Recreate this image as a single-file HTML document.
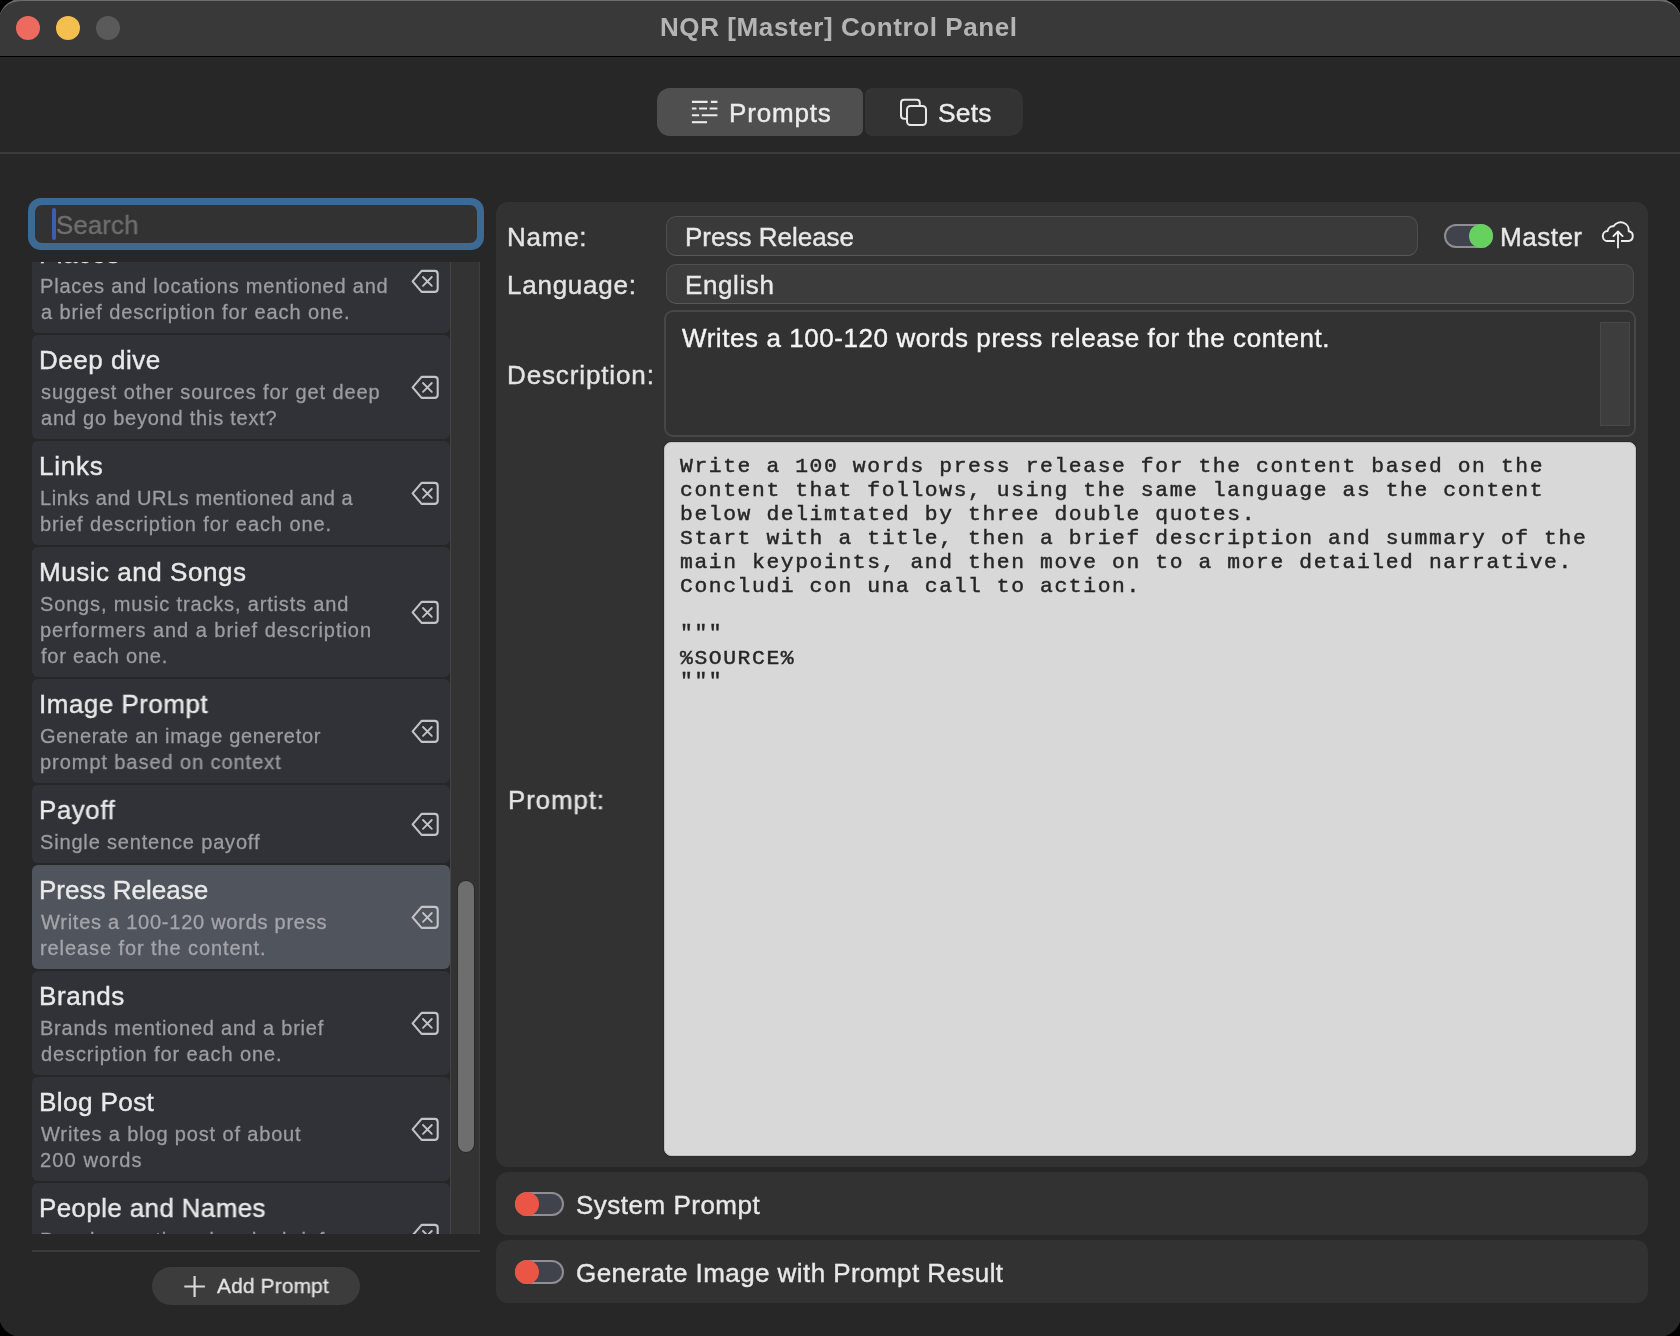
<!DOCTYPE html>
<html><head><meta charset="utf-8">
<style>
*{box-sizing:border-box;margin:0;padding:0}
html,body{width:1680px;height:1336px;overflow:hidden;background:#000}
body{font-family:"Liberation Sans",sans-serif;position:relative}
.a{position:absolute}
.t{position:absolute;white-space:pre;line-height:1;will-change:transform}
#win{position:absolute;left:-1px;top:-1px;width:1682px;height:1338px;border-radius:22px;background:#272727;overflow:hidden}
#winb{position:absolute;left:-1px;top:-1px;width:1682px;height:1338px;border-radius:22px;border-top:2.6px solid #6c6c6c}
#titlebar{position:absolute;left:0;top:0;width:1684px;height:57px;background:#393939}
.light{position:absolute;width:24.4px;height:24.4px;border-radius:50%}
#list{position:absolute;left:32px;top:262px;width:418px;height:972px;overflow:hidden}
.item{position:absolute;left:0;width:418px;background:#303237;border-radius:6px}
.item.sel{background:#50545c}
.ititle{position:absolute;left:8px;font-size:26px;color:#e6e6e6;white-space:pre;line-height:1}
.idesc{position:absolute;left:8px;font-size:20px;color:#9c9ca1;white-space:pre;line-height:1;letter-spacing:0.7px}
.del{position:absolute;left:379px;width:28px;height:24px}
.panel{position:absolute;left:496px;width:1152px;background:#323232;border-radius:12px}
.lbl{position:absolute;font-size:26px;color:#e4e4e4;white-space:pre;line-height:1}
.toggle{position:absolute;width:49px;height:24px;border-radius:12px;background:#40434b;border:2px solid #8e8e93}
.knob{position:absolute;top:-2px;width:24px;height:24px;border-radius:50%}
.mono{position:absolute;will-change:transform;left:680px;font-family:"Liberation Mono",monospace;font-size:21px;letter-spacing:1.58px;color:#262626;-webkit-text-stroke:0.45px #262626;transform-origin:0 0;transform:scaleX(1.0155);white-space:pre;line-height:1}
</style></head><body>
<div id="win"><div id="titlebar"></div></div><div id="winb"></div>
<!-- title bar -->
<div class="light" style="left:15.8px;top:15.8px;background:#ed6a5e"></div>
<div class="light" style="left:55.8px;top:15.8px;background:#f5bf4f"></div>
<div class="light" style="left:95.8px;top:15.8px;background:#5a5a5a"></div>
<div class="a" style="left:0;top:56px;width:1680px;height:1px;background:#000"></div>
<!-- segmented control -->
<div class="a" style="left:657px;top:88px;width:206px;height:48px;background:#4f4f4f;border-radius:13px 7px 7px 13px"></div>
<div class="a" style="left:865px;top:88px;width:158px;height:48px;background:#333333;border-radius:7px 13px 13px 7px"></div>
<svg class="a" style="left:690px;top:99px" width="30" height="26" viewBox="0 0 30 26">
  <g stroke="#ececec" stroke-width="2.1" fill="none">
    <path d="M1.9 2.9H17.6M20.9 2.9H27.4"/>
    <path d="M1.9 9.5H6.5M9.1 9.5H17M19.6 9.5H27.4"/>
    <path d="M1.9 16.3H9.1M11.7 16.3H27.4"/>
    <path d="M1.9 23.2H17"/>
  </g>
</svg>
<svg class="a" style="left:898px;top:97px" width="32" height="32" viewBox="0 0 32 32">
  <g stroke="#e8e8e8" stroke-width="2" fill="none">
    <path d="M9 9V6Q9 3 12 3H6Q3 3 3 6" style="display:none"/>
    <path d="M9 21.8H6.2Q3 21.8 3 18.6V6Q3 2.8 6.2 2.8H18.6Q21.8 2.8 21.8 6V9"/>
    <rect x="9" y="9" width="19" height="19" rx="3.5"/>
  </g>
</svg>
<div class="a" style="left:0;top:152px;width:1680px;height:2px;background:#3b3b3b"></div>

<!-- search -->
<div class="a" style="left:28px;top:198px;width:456px;height:52px;border-radius:13px;background:#3d6a95"></div>
<div class="a" style="left:35px;top:205px;width:442px;height:38px;border-radius:7px;background:#323232"></div>
<div class="a" style="left:52px;top:208px;width:4px;height:32px;border-radius:2px;background:#3c5fb2"></div>

<!-- list -->
<div id="list">
<div class="item" style="top:-33px;height:104px"></div>
<svg class="a" style="left:379px;top:6.7px" width="28" height="24" viewBox="0 0 28 24"><g fill="none" stroke="#c4c4c6" stroke-width="2.1" stroke-linejoin="round" stroke-linecap="round"><path d="M10.6 1.9H23.6Q26.7 1.9 26.7 5V19.8Q26.7 22.9 23.6 22.9H10.6L1.6 12.4Z"/><path d="M12 8L20.8 16.8M20.8 8L12 16.8" stroke-width="1.8"/></g></svg>
<div class="item" style="top:73px;height:104px"></div>
<svg class="a" style="left:379px;top:112.7px" width="28" height="24" viewBox="0 0 28 24"><g fill="none" stroke="#c4c4c6" stroke-width="2.1" stroke-linejoin="round" stroke-linecap="round"><path d="M10.6 1.9H23.6Q26.7 1.9 26.7 5V19.8Q26.7 22.9 23.6 22.9H10.6L1.6 12.4Z"/><path d="M12 8L20.8 16.8M20.8 8L12 16.8" stroke-width="1.8"/></g></svg>
<div class="item" style="top:179px;height:104px"></div>
<svg class="a" style="left:379px;top:218.7px" width="28" height="24" viewBox="0 0 28 24"><g fill="none" stroke="#c4c4c6" stroke-width="2.1" stroke-linejoin="round" stroke-linecap="round"><path d="M10.6 1.9H23.6Q26.7 1.9 26.7 5V19.8Q26.7 22.9 23.6 22.9H10.6L1.6 12.4Z"/><path d="M12 8L20.8 16.8M20.8 8L12 16.8" stroke-width="1.8"/></g></svg>
<div class="item" style="top:285px;height:130px"></div>
<svg class="a" style="left:379px;top:337.7px" width="28" height="24" viewBox="0 0 28 24"><g fill="none" stroke="#c4c4c6" stroke-width="2.1" stroke-linejoin="round" stroke-linecap="round"><path d="M10.6 1.9H23.6Q26.7 1.9 26.7 5V19.8Q26.7 22.9 23.6 22.9H10.6L1.6 12.4Z"/><path d="M12 8L20.8 16.8M20.8 8L12 16.8" stroke-width="1.8"/></g></svg>
<div class="item" style="top:417px;height:104px"></div>
<svg class="a" style="left:379px;top:456.7px" width="28" height="24" viewBox="0 0 28 24"><g fill="none" stroke="#c4c4c6" stroke-width="2.1" stroke-linejoin="round" stroke-linecap="round"><path d="M10.6 1.9H23.6Q26.7 1.9 26.7 5V19.8Q26.7 22.9 23.6 22.9H10.6L1.6 12.4Z"/><path d="M12 8L20.8 16.8M20.8 8L12 16.8" stroke-width="1.8"/></g></svg>
<div class="item" style="top:523px;height:78px"></div>
<svg class="a" style="left:379px;top:549.7px" width="28" height="24" viewBox="0 0 28 24"><g fill="none" stroke="#c4c4c6" stroke-width="2.1" stroke-linejoin="round" stroke-linecap="round"><path d="M10.6 1.9H23.6Q26.7 1.9 26.7 5V19.8Q26.7 22.9 23.6 22.9H10.6L1.6 12.4Z"/><path d="M12 8L20.8 16.8M20.8 8L12 16.8" stroke-width="1.8"/></g></svg>
<div class="item sel" style="top:603px;height:104px"></div>
<svg class="a" style="left:379px;top:642.7px" width="28" height="24" viewBox="0 0 28 24"><g fill="none" stroke="#c4c4c6" stroke-width="2.1" stroke-linejoin="round" stroke-linecap="round"><path d="M10.6 1.9H23.6Q26.7 1.9 26.7 5V19.8Q26.7 22.9 23.6 22.9H10.6L1.6 12.4Z"/><path d="M12 8L20.8 16.8M20.8 8L12 16.8" stroke-width="1.8"/></g></svg>
<div class="item" style="top:709px;height:104px"></div>
<svg class="a" style="left:379px;top:748.7px" width="28" height="24" viewBox="0 0 28 24"><g fill="none" stroke="#c4c4c6" stroke-width="2.1" stroke-linejoin="round" stroke-linecap="round"><path d="M10.6 1.9H23.6Q26.7 1.9 26.7 5V19.8Q26.7 22.9 23.6 22.9H10.6L1.6 12.4Z"/><path d="M12 8L20.8 16.8M20.8 8L12 16.8" stroke-width="1.8"/></g></svg>
<div class="item" style="top:815px;height:104px"></div>
<svg class="a" style="left:379px;top:854.7px" width="28" height="24" viewBox="0 0 28 24"><g fill="none" stroke="#c4c4c6" stroke-width="2.1" stroke-linejoin="round" stroke-linecap="round"><path d="M10.6 1.9H23.6Q26.7 1.9 26.7 5V19.8Q26.7 22.9 23.6 22.9H10.6L1.6 12.4Z"/><path d="M12 8L20.8 16.8M20.8 8L12 16.8" stroke-width="1.8"/></g></svg>
<div class="item" style="top:921px;height:104px"></div>
<svg class="a" style="left:379px;top:960.7px" width="28" height="24" viewBox="0 0 28 24"><g fill="none" stroke="#c4c4c6" stroke-width="2.1" stroke-linejoin="round" stroke-linecap="round"><path d="M10.6 1.9H23.6Q26.7 1.9 26.7 5V19.8Q26.7 22.9 23.6 22.9H10.6L1.6 12.4Z"/><path d="M12 8L20.8 16.8M20.8 8L12 16.8" stroke-width="1.8"/></g></svg>
<div class="t" style="left:7.0px;top:-21px;font-size:26px;letter-spacing:0.5px;color:#e9e9e9;-webkit-text-stroke:0.4px #e9e9e9;">Places</div>
<div class="t" style="left:7.6px;top:14px;font-size:20px;letter-spacing:0.78px;color:#9c9ca1;transform:scaleX(1.002);transform-origin:0 0;-webkit-text-stroke:0.3px #9c9ca1;">Places and locations mentioned and</div>
<div class="t" style="left:8.6px;top:40px;font-size:20px;letter-spacing:0.884px;color:#9c9ca1;-webkit-text-stroke:0.3px #9c9ca1;">a brief description for each one.</div>
<div class="t" style="left:7.0px;top:85px;font-size:26px;letter-spacing:0.525px;color:#e9e9e9;-webkit-text-stroke:0.4px #e9e9e9;">Deep dive</div>
<div class="t" style="left:8.6px;top:120px;font-size:20px;letter-spacing:0.895px;color:#9c9ca1;-webkit-text-stroke:0.3px #9c9ca1;">suggest other sources for get deep</div>
<div class="t" style="left:8.6px;top:146px;font-size:20px;letter-spacing:0.772px;color:#9c9ca1;-webkit-text-stroke:0.3px #9c9ca1;">and go beyond this text?</div>
<div class="t" style="left:7.0px;top:191px;font-size:26px;letter-spacing:0.75px;color:#e9e9e9;-webkit-text-stroke:0.4px #e9e9e9;">Links</div>
<div class="t" style="left:7.6px;top:226px;font-size:20px;letter-spacing:0.581px;color:#9c9ca1;-webkit-text-stroke:0.3px #9c9ca1;">Links and URLs mentioned and a</div>
<div class="t" style="left:7.6px;top:252px;font-size:20px;letter-spacing:0.92px;color:#9c9ca1;-webkit-text-stroke:0.3px #9c9ca1;">brief description for each one.</div>
<div class="t" style="left:7.0px;top:297px;font-size:26px;letter-spacing:0.536px;color:#e9e9e9;transform:scaleX(0.9976);transform-origin:0 0;-webkit-text-stroke:0.4px #e9e9e9;">Music and Songs</div>
<div class="t" style="left:7.6px;top:332px;font-size:20px;letter-spacing:0.84px;color:#9c9ca1;-webkit-text-stroke:0.3px #9c9ca1;">Songs, music tracks, artists and</div>
<div class="t" style="left:7.6px;top:358px;font-size:20px;letter-spacing:0.971px;color:#9c9ca1;-webkit-text-stroke:0.3px #9c9ca1;">performers and a brief description</div>
<div class="t" style="left:8.6px;top:384px;font-size:20px;letter-spacing:0.742px;color:#9c9ca1;transform:scaleX(1.0056);transform-origin:0 0;-webkit-text-stroke:0.3px #9c9ca1;">for each one.</div>
<div class="t" style="left:7.01px;top:429px;font-size:26px;letter-spacing:0.536px;color:#e9e9e9;transform:scaleX(0.9964);transform-origin:0 0;-webkit-text-stroke:0.4px #e9e9e9;">Image Prompt</div>
<div class="t" style="left:7.6px;top:464px;font-size:20px;letter-spacing:0.692px;color:#9c9ca1;-webkit-text-stroke:0.3px #9c9ca1;">Generate an image generetor</div>
<div class="t" style="left:7.6px;top:490px;font-size:20px;letter-spacing:0.959px;color:#9c9ca1;transform:scaleX(0.9975);transform-origin:0 0;-webkit-text-stroke:0.3px #9c9ca1;">prompt based on context</div>
<div class="t" style="left:7.01px;top:535px;font-size:26px;letter-spacing:0.6px;color:#e9e9e9;transform:scaleX(0.9933);transform-origin:0 0;-webkit-text-stroke:0.4px #e9e9e9;">Payoff</div>
<div class="t" style="left:7.6px;top:570px;font-size:20px;letter-spacing:0.831px;color:#9c9ca1;-webkit-text-stroke:0.3px #9c9ca1;">Single sentence payoff</div>
<div class="t" style="left:7.0px;top:615px;font-size:26px;letter-spacing:0.008px;color:#e9e9e9;-webkit-text-stroke:0.4px #e9e9e9;">Press Release</div>
<div class="t" style="left:8.6px;top:650px;font-size:20px;letter-spacing:0.746px;color:#a3a5aa;-webkit-text-stroke:0.3px #a3a5aa;">Writes a 100-120 words press</div>
<div class="t" style="left:7.6px;top:676px;font-size:20px;letter-spacing:0.911px;color:#a3a5aa;-webkit-text-stroke:0.3px #a3a5aa;">release for the content.</div>
<div class="t" style="left:7.0px;top:721px;font-size:26px;letter-spacing:0.54px;color:#e9e9e9;transform:scaleX(1.0024);transform-origin:0 0;-webkit-text-stroke:0.4px #e9e9e9;">Brands</div>
<div class="t" style="left:7.6px;top:756px;font-size:20px;letter-spacing:0.772px;color:#9c9ca1;-webkit-text-stroke:0.3px #9c9ca1;">Brands mentioned and a brief</div>
<div class="t" style="left:8.6px;top:782px;font-size:20px;letter-spacing:0.9px;color:#9c9ca1;-webkit-text-stroke:0.3px #9c9ca1;">description for each one.</div>
<div class="t" style="left:6.99px;top:827px;font-size:26px;letter-spacing:0.35px;color:#e9e9e9;transform:scaleX(1.0071);transform-origin:0 0;-webkit-text-stroke:0.4px #e9e9e9;">Blog Post</div>
<div class="t" style="left:8.6px;top:862px;font-size:20px;letter-spacing:0.85px;color:#9c9ca1;-webkit-text-stroke:0.3px #9c9ca1;">Writes a blog post of about</div>
<div class="t" style="left:7.6px;top:888px;font-size:20px;letter-spacing:1.125px;color:#9c9ca1;transform:scaleX(1.002);transform-origin:0 0;-webkit-text-stroke:0.3px #9c9ca1;">200 words</div>
<div class="t" style="left:7.01px;top:933px;font-size:26px;letter-spacing:0.393px;color:#e9e9e9;transform:scaleX(0.9973);transform-origin:0 0;-webkit-text-stroke:0.4px #e9e9e9;">People and Names</div>
<div class="t" style="left:7.6px;top:968px;font-size:20px;letter-spacing:0.85px;color:#9c9ca1;-webkit-text-stroke:0.3px #9c9ca1;">People mentioned and a brief</div>
<div class="t" style="left:8.6px;top:994px;font-size:20px;letter-spacing:0.85px;color:#9c9ca1;-webkit-text-stroke:0.3px #9c9ca1;">description for each one.</div>
</div>
<!-- scrollbar -->
<div class="a" style="left:450px;top:262px;width:30px;height:972px;background:#333333;border-left:1px solid #454545;border-right:1px solid #3e3e3e"></div>
<div class="a" style="left:458px;top:881px;width:16px;height:271px;border-radius:8px;background:#6e6e6e;box-shadow:0 0 0 1px #2a2a2a"></div>
<div class="a" style="left:32px;top:1250px;width:448px;height:1.5px;background:#3b3b3b"></div>
<div class="a" style="left:152px;top:1267px;width:208px;height:38px;border-radius:19px;background:#3c3c3d"></div>
<svg class="a" style="left:182px;top:1275px" width="24" height="24" viewBox="0 0 24 24"><path d="M12.6 1V22M2.3 11.5H22.9" stroke="#d8d8d8" stroke-width="2.2"/></svg>

<!-- detail panel -->
<div class="panel" style="top:202px;height:965px"></div>
<div class="a" style="left:666px;top:216px;width:752px;height:40px;border-radius:10px;background:#3a3a3a;border:1px solid #4f4f4f;border-bottom-color:#595959"></div>
<div class="toggle" style="left:1443.5px;top:224px;width:49.7px"><div class="knob" style="left:23.7px;background:#67d160"></div></div>
<svg class="a" style="left:1595px;top:215px" width="45" height="40" viewBox="0 0 45 40">
 <g fill="none" stroke="#eeeeee" stroke-width="1.9" stroke-linecap="butt" stroke-linejoin="round">
  <path d="M19.8 26H13A5 5 0 0 1 12.6 16A5.6 5.6 0 0 1 18.6 11.3A8.2 8.2 0 0 1 33.8 16.3A4.9 4.9 0 0 1 33.2 26H26"/>
  <path d="M23 32.6V17M18.4 21.1L23 16.5L27.6 21.1" stroke-linecap="round"/>
 </g>
</svg>
<div class="a" style="left:666px;top:264px;width:968px;height:40px;border-radius:10px;background:#3c3c3c;border:1px solid #4f4f4f;border-bottom-color:#595959"></div>
<div class="a" style="left:664px;top:310px;width:972px;height:127px;border-radius:9px;background:#323232;border:2px solid #474747"></div>
<div class="a" style="left:1600px;top:322px;width:30px;height:104px;background:#3d3d3d;border:1px solid #484848"></div>
<div class="a" style="left:664px;top:442px;width:972px;height:714px;border-radius:7px;background:#d8d8d8;border:1px solid #c2c2c4;box-shadow:0 0 0 1px #2b2b2b"></div>
<div class="mono" style="top:456px">Write a 100 words press release for the content based on the</div>
<div class="mono" style="top:480px">content that follows, using the same language as the content</div>
<div class="mono" style="top:504px">below delimtated by three double quotes.</div>
<div class="mono" style="top:528px">Start with a title, then a brief description and summary of the</div>
<div class="mono" style="top:552px">main keypoints, and then move on to a more detailed narrative.</div>
<div class="mono" style="top:576px">Concludi con una call to action.</div>
<div class="mono" style="top:622.5px">&quot;&quot;&quot;</div>
<div class="mono" style="top:648px">%SOURCE%</div>
<div class="mono" style="top:670.5px">&quot;&quot;&quot;</div>
<!-- bottom toggles -->
<div class="panel" style="top:1172px;height:63px"></div>
<div class="toggle" style="left:515px;top:1192px"><div class="knob" style="left:-2px;background:#eb5545"></div></div>
<div class="panel" style="top:1240px;height:63px"></div>
<div class="toggle" style="left:515px;top:1260px"><div class="knob" style="left:-2px;background:#eb5545"></div></div>
<div class="t" style="left:660.3px;top:14px;font-size:26px;font-weight:700;letter-spacing:0.588px;color:#b4b4b4;">NQR [Master] Control Panel</div>
<div class="t" style="left:728.5px;top:100.2px;font-size:26px;letter-spacing:0.817px;color:#ececec;-webkit-text-stroke:0.4px #ececec;">Prompts</div>
<div class="t" style="left:938.09px;top:100.1px;font-size:26px;letter-spacing:0.233px;color:#ececec;transform:scaleX(1.0137);transform-origin:0 0;-webkit-text-stroke:0.4px #ececec;">Sets</div>
<div class="t" style="left:55.51px;top:212px;font-size:26px;letter-spacing:0.1px;color:#6f6f6f;transform:scaleX(0.9938);transform-origin:0 0;-webkit-text-stroke:0.4px #6f6f6f;">Search</div>
<div class="t" style="left:216.6px;top:1275px;font-size:21px;letter-spacing:0.156px;color:#e4e4e4;transform:scaleX(0.9947);transform-origin:0 0;-webkit-text-stroke:0.3px #e4e4e4;">Add Prompt</div>
<div class="t" style="left:507.0px;top:224px;font-size:26px;letter-spacing:0.75px;color:#e4e4e4;-webkit-text-stroke:0.4px #e4e4e4;">Name:</div>
<div class="t" style="left:685.0px;top:224px;font-size:26px;color:#e8e8e8;-webkit-text-stroke:0.4px #e8e8e8;">Press Release</div>
<div class="t" style="left:1499.69px;top:224px;font-size:26px;letter-spacing:0.46px;color:#e8e8e8;transform:scaleX(1.0037);transform-origin:0 0;-webkit-text-stroke:0.4px #e8e8e8;">Master</div>
<div class="t" style="left:507.0px;top:272px;font-size:26px;letter-spacing:0.75px;color:#e4e4e4;-webkit-text-stroke:0.4px #e4e4e4;">Language:</div>
<div class="t" style="left:685.01px;top:272px;font-size:26px;letter-spacing:0.6px;color:#e8e8e8;transform:scaleX(0.9953);transform-origin:0 0;-webkit-text-stroke:0.4px #e8e8e8;">English</div>
<div class="t" style="left:507.0px;top:362px;font-size:26px;letter-spacing:0.845px;color:#e4e4e4;transform:scaleX(1.0021);transform-origin:0 0;-webkit-text-stroke:0.4px #e4e4e4;">Description:</div>
<div class="t" style="left:681.6px;top:325.4px;font-size:26px;letter-spacing:0.567px;color:#f4f4f4;-webkit-text-stroke:0.4px #f4f4f4;">Writes a 100-120 words press release for the content.</div>
<div class="t" style="left:507.51px;top:787px;font-size:26px;letter-spacing:0.917px;color:#e4e4e4;transform:scaleX(0.9946);transform-origin:0 0;-webkit-text-stroke:0.4px #e4e4e4;">Prompt:</div>
<div class="t" style="left:576.0px;top:1192px;font-size:26px;letter-spacing:0.5px;color:#e8e8e8;-webkit-text-stroke:0.4px #e8e8e8;">System Prompt</div>
<div class="t" style="left:576.0px;top:1260px;font-size:26px;letter-spacing:0.431px;color:#e8e8e8;-webkit-text-stroke:0.4px #e8e8e8;">Generate Image with Prompt Result</div>
</body></html>
